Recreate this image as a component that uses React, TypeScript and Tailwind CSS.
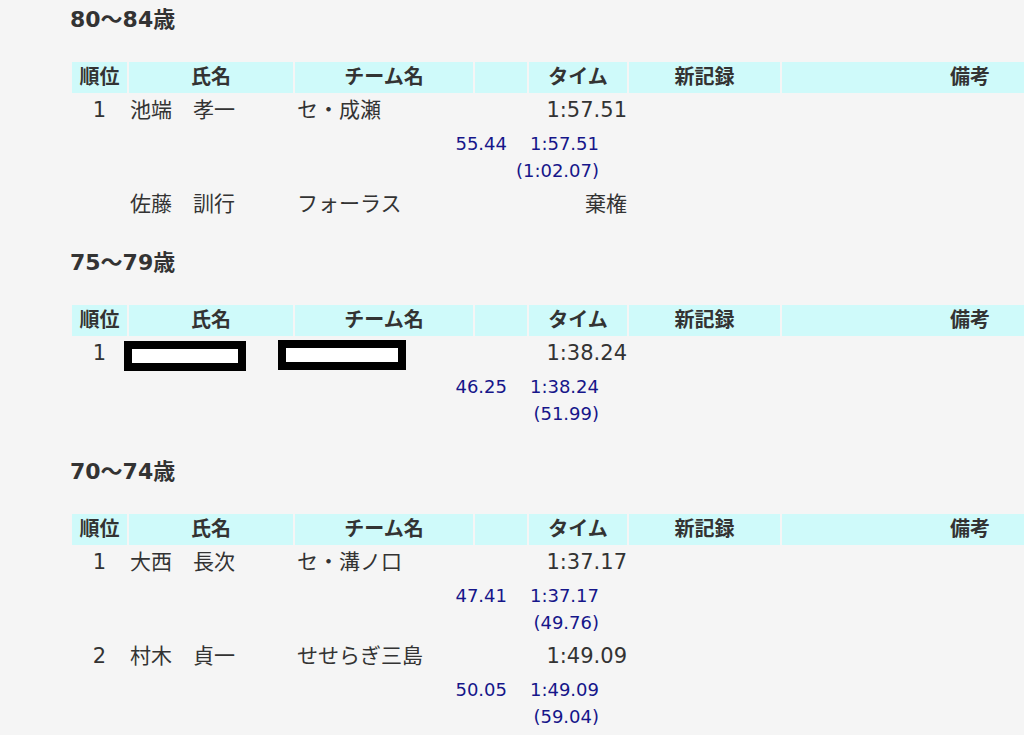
type Split = {
  lap: string;
  total: string;
  sub: string;
};

type Entry = {
  rank: string;
  name: string;
  team: string;
  time: string;
  split?: Split;
  hidden?: boolean;
};

type Group = {
  title: string;
  entries: Entry[];
  spacing: string;
};

const groups: Group[] = [
  {
    title: "80～84歳",
    spacing: "pt-[5px]",
    entries: [
      {
        rank: "1",
        name: "池端　孝一",
        team: "セ・成瀬",
        time: "1:57.51",
        split: { lap: "55.44", total: "1:57.51", sub: "(1:02.07)" },
      },
      { rank: "", name: "佐藤　訓行", team: "フォーラス", time: "棄権" },
    ],
  },
  {
    title: "75～79歳",
    spacing: "pt-[27px]",
    entries: [
      {
        rank: "1",
        name: "",
        team: "",
        time: "1:38.24",
        hidden: true,
        split: { lap: "46.25", total: "1:38.24", sub: "(51.99)" },
      },
    ],
  },
  {
    title: "70～74歳",
    spacing: "pt-[25px]",
    entries: [
      {
        rank: "1",
        name: "大西　長次",
        team: "セ・溝ノ口",
        time: "1:37.17",
        split: { lap: "47.41", total: "1:37.17", sub: "(49.76)" },
      },
      {
        rank: "2",
        name: "村木　貞一",
        team: "せせらぎ三島",
        time: "1:49.09",
        split: { lap: "50.05", total: "1:49.09", sub: "(59.04)" },
      },
    ],
  },
];

function ResultTable({ entries }: { entries: Entry[] }) {
  return (
    <table className="w-[1090px] table-fixed border-separate border-spacing-[2px]">
      <thead>
        <tr className="bg-[#cffafa] text-[20px] font-bold leading-[31px] text-[#333]">
          <th className="h-[31px] w-[55px] p-0 text-center">順位</th>
          <th className="w-[164px] p-0 text-center">氏名</th>
          <th className="w-[178px] p-0 text-center">チーム名</th>
          <th className="w-[52px] p-0"></th>
          <th className="w-[98px] p-0 text-center">タイム</th>
          <th className="w-[151px] p-0 text-center">新記録</th>
          <th className="w-[376px] p-0 text-center">備考</th>
        </tr>
      </thead>

      <tbody>
        {entries.map((entry, i) => (
          <EntryRows key={i} entry={entry} />
        ))}
      </tbody>
    </table>
  );
}

function EntryRows({ entry }: { entry: Entry }) {
  return (
    <>
      <tr className="text-[21px] leading-[30px] text-[#333]">
        <td className="h-[30px] p-0 text-center">{entry.rank}</td>

        <td className="relative p-0 pl-px">
          {entry.hidden ? (
            <div className="absolute left-[-5px] top-[3px] h-[30px] w-[122px] border-[8px] border-black bg-white" />
          ) : (
            entry.name
          )}
        </td>

        <td className="relative p-0 pl-[2px]">
          {entry.hidden ? (
            <div className="absolute left-[-17px] top-[2px] h-[30px] w-[128px] border-[8px] border-black bg-white" />
          ) : (
            entry.team
          )}
        </td>

        <td className="p-0"></td>
        <td className="p-0 text-right">{entry.time}</td>
        <td className="p-0"></td>
        <td className="p-0"></td>
      </tr>

      {entry.split && (
        <tr className="text-[18px] leading-[27px] text-[#16168a]">
          <td className="h-[60px] p-0"></td>
          <td className="p-0"></td>
          <td colSpan={3} className="p-0">
            <div className="flex items-start justify-end pr-[28px]">
              <span className="text-right">{entry.split.lap}</span>
              <div className="w-[92px] text-right">
                <div>{entry.split.total}</div>
                <div>{entry.split.sub}</div>
              </div>
            </div>
          </td>
          <td className="p-0"></td>
          <td className="p-0"></td>
        </tr>
      )}
    </>
  );
}

export default function App() {
  return (
    <div className="h-[735px] overflow-hidden bg-[#f5f5f5] font-['DejaVu_Sans','Noto_Sans_CJK_JP',sans-serif]">
      <div className="pl-[70px]">
        {groups.map((group) => (
          <section key={group.title} className={group.spacing}>
            <h2 className="h-[30px] text-[22px] font-bold leading-[30px] text-[#333]">
              {group.title}
            </h2>

            <div className="mt-[25px]">
              <ResultTable entries={group.entries} />
            </div>
          </section>
        ))}
      </div>
    </div>
  );
}
